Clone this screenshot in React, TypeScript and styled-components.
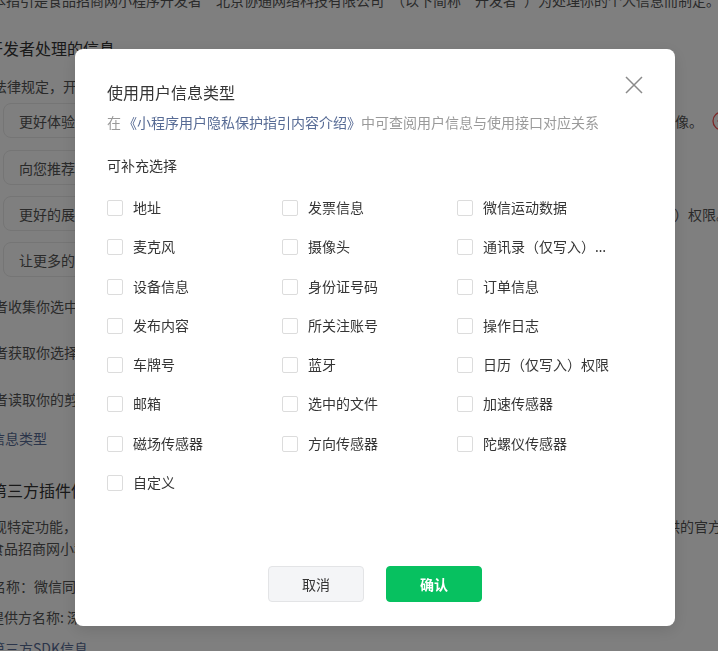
import React from "react";
import styled, { createGlobalStyle } from "styled-components";

const GlobalStyle = createGlobalStyle`
  html, body { margin: 0; padding: 0; overflow: hidden; background: #fff; }
  body {
    width: 718px;
    height: 651px;
    font-family: "Noto Sans CJK SC", "Noto Sans", sans-serif;
  }
  * { box-sizing: border-box; }
`;

/* ---------- background page ---------- */

const Page = styled.div`
  display: flow-root;
  width: 740px;
  color: #555;
  font-size: 14px;
  line-height: 22px;
`;

const Line = styled.p<{ $mt: number; $indent: number }>`
  margin: ${(p) => p.$mt}px 0 0 ${(p) => p.$indent}px;
  white-space: nowrap;
`;

const Heading = styled.h2<{ $mt: number; $indent: number }>`
  margin: ${(p) => p.$mt}px 0 0 ${(p) => p.$indent}px;
  font-size: 16px;
  line-height: 24px;
  font-weight: 400;
  color: #333;
  white-space: nowrap;
`;

const LinkLine = styled.a<{ $mt: number; $indent: number }>`
  display: block;
  margin: ${(p) => p.$mt}px 0 0 ${(p) => p.$indent}px;
  color: #576b95;
  text-decoration: none;
  white-space: nowrap;
`;

const Row = styled.div<{ $mt: number; $pr: number }>`
  display: flex;
  align-items: center;
  margin-top: ${(p) => p.$mt}px;
  padding-right: ${(p) => p.$pr}px;
`;

const PurposeBox = styled.div`
  flex-shrink: 0;
  width: 300px;
  height: 35px;
  margin-left: 3px;
  padding: 0 15px;
  display: flex;
  align-items: center;
  border: 1px solid #eaeaea;
  border-radius: 8px;
  white-space: nowrap;
`;

const RowLead = styled.span<{ $indent: number }>`
  margin-left: ${(p) => p.$indent}px;
  white-space: nowrap;
`;

const Tail = styled.span`
  margin-left: auto;
  white-space: nowrap;
`;

const RemoveIcon = styled.svg`
  flex-shrink: 0;
  margin-left: 9px;
`;

/* ---------- dialog ---------- */

const Overlay = styled.div`
  position: fixed;
  inset: 0;
  background: rgba(0, 0, 0, 0.5);
  padding: 49px 0 0 75px;
`;

const Dialog = styled.div`
  position: relative;
  width: 600px;
  height: 577px;
  background: #fff;
  border-radius: 8px;
  padding: 32px 32px 24px;
  display: flex;
  flex-direction: column;
  box-shadow: 0 4px 16px rgba(0, 0, 0, 0.12);
  color: #353535;
`;

const CloseButton = styled.button`
  position: absolute;
  top: 27px;
  right: 32px;
  width: 18px;
  height: 18px;
  padding: 0;
  border: 0;
  background: transparent;
  display: flex;
  cursor: pointer;
`;

const Title = styled.h3`
  margin: 0;
  font-size: 16px;
  line-height: 22px;
  font-weight: 400;
  color: #353535;
`;

const Desc = styled.p`
  margin: 8px 0 0;
  font-size: 14px;
  line-height: 22px;
  color: #9a9a9a;
  white-space: nowrap;
`;

const DocLink = styled.a`
  color: #576b95;
  text-decoration: none;
  margin-left: 2px;
`;

const SectionLabel = styled.p`
  margin: 21px 0 0;
  font-size: 14px;
  line-height: 22px;
  color: #353535;
`;

const OptionGrid = styled.div`
  margin-top: 22px;
  display: grid;
  grid-template-columns: repeat(3, 175px);
  grid-auto-rows: 20px;
  row-gap: 19.3px;
`;

const Option = styled.label`
  display: flex;
  align-items: center;
  gap: 10px;
  cursor: pointer;
`;

const CheckBox = styled.span`
  flex-shrink: 0;
  width: 16px;
  height: 16px;
  border: 1px solid #dcdcdc;
  border-radius: 2px;
  background: #fff;
`;

const OptionText = styled.span`
  max-width: 130px;
  overflow: hidden;
  text-overflow: ellipsis;
  white-space: nowrap;
  font-family: "Noto Sans", "Noto Sans CJK SC", sans-serif;
  font-size: 14px;
  line-height: 20px;
  color: #353535;
`;

const Footer = styled.div`
  margin-top: auto;
  display: flex;
  justify-content: center;
  gap: 22px;
`;

const Button = styled.button<{ $primary?: boolean }>`
  width: 96px;
  height: 36px;
  border-radius: 4px;
  font-family: "Noto Sans CJK SC", sans-serif;
  font-size: 14px;
  cursor: pointer;
  border: 1px solid ${(p) => (p.$primary ? "#07c160" : "#e3e4e6")};
  background: ${(p) => (p.$primary ? "#07c160" : "#f4f5f7")};
  color: ${(p) => (p.$primary ? "#fff" : "#353535")};
  font-weight: ${(p) => (p.$primary ? 700 : 400)};
`;

const options = [
  "地址", "发票信息", "微信运动数据",
  "麦克风", "摄像头", "通讯录（仅写入）权限",
  "设备信息", "身份证号码", "订单信息",
  "发布内容", "所关注账号", "操作日志",
  "车牌号", "蓝牙", "日历（仅写入）权限",
  "邮箱", "选中的文件", "加速传感器",
  "磁场传感器", "方向传感器", "陀螺仪传感器",
  "自定义",
];

export default function App() {
  return (
    <>
      <GlobalStyle />
      <Page>
        <Line $mt={-11} $indent={-8}>
          本指引是食品招商网小程序开发者“北京协通网络科技有限公司”（以下简称“开发者”）为处理你的个人信息而制定。
        </Line>
        <Heading $mt={25} $indent={-13}>开发者处理的信息</Heading>
        <Line $mt={15} $indent={-35}>依据法律规定，开发者仅处理实现小程序功能所必要的信息。</Line>

        <Row $mt={6} $pr={8}>
          <PurposeBox>更好体验小程序服务</PurposeBox>
          <Tail>开发者将收集你的微信昵称、头像。</Tail>
          <RemoveIcon width="20" height="20" viewBox="0 0 20 20">
            <circle cx="10" cy="10" r="9" fill="none" stroke="#fa5151" strokeWidth="1.3" />
            <line x1="5.5" y1="10" x2="14.5" y2="10" stroke="#fa5151" strokeWidth="1.3" />
          </RemoveIcon>
        </Row>
        <Row $mt={12} $pr={20}>
          <PurposeBox>向您推荐产品</PurposeBox>
        </Row>
        <Row $mt={11} $pr={10}>
          <PurposeBox>更好的展示商品</PurposeBox>
          <Tail>开发者将在获取你的明示同意后，使用你的相册（仅写入）权限。</Tail>
        </Row>
        <Row $mt={11} $pr={20}>
          <PurposeBox>让更多的人了解产品</PurposeBox>
        </Row>

        <Line $mt={18} $indent={-34}>开发者收集你选中的照片或视频信息</Line>
        <Line $mt={24} $indent={-34}>开发者获取你选择的位置信息</Line>
        <Line $mt={25} $indent={-34}>开发者读取你的剪切板</Line>
        <LinkLine $mt={17} $indent={-37}>用户信息类型</LinkLine>

        <Heading $mt={29} $indent={-9}>第三方插件信息</Heading>
        <Row $mt={13} $pr={18}>
          <RowLead $indent={-35}>为实现特定功能，开发者可能会接入由第三方提供的插件，</RowLead>
          <Tail>插件由第三方提供的官方</Tail>
        </Row>
        <Line $mt={0} $indent={-10}>食品招商网小程序使用的插件如下：</Line>
        <Line $mt={16} $indent={-36}>插件名称：微信同声传译</Line>
        <Line $mt={9} $indent={-10}>提供方名称: 深圳市腾讯计算机系统有限公司</Line>
        <LinkLine $mt={9} $indent={-9}>第三方SDK信息</LinkLine>
      </Page>

      <Overlay>
        <Dialog>
          <CloseButton aria-label="关闭">
            <svg width="18" height="18" viewBox="0 0 18 18">
              <path d="M1 1 L17 17 M17 1 L1 17" stroke="#8a8a8a" strokeWidth="1.5" fill="none" />
            </svg>
          </CloseButton>
          <Title>使用用户信息类型</Title>
          <Desc>
            在<DocLink>《小程序用户隐私保护指引内容介绍》</DocLink>中可查阅用户信息与使用接口对应关系
          </Desc>
          <SectionLabel>可补充选择</SectionLabel>
          <OptionGrid>
            {options.map((o) => (
              <Option key={o}>
                <CheckBox />
                <OptionText>{o}</OptionText>
              </Option>
            ))}
          </OptionGrid>
          <Footer>
            <Button>取消</Button>
            <Button $primary>确认</Button>
          </Footer>
        </Dialog>
      </Overlay>
    </>
  );
}
